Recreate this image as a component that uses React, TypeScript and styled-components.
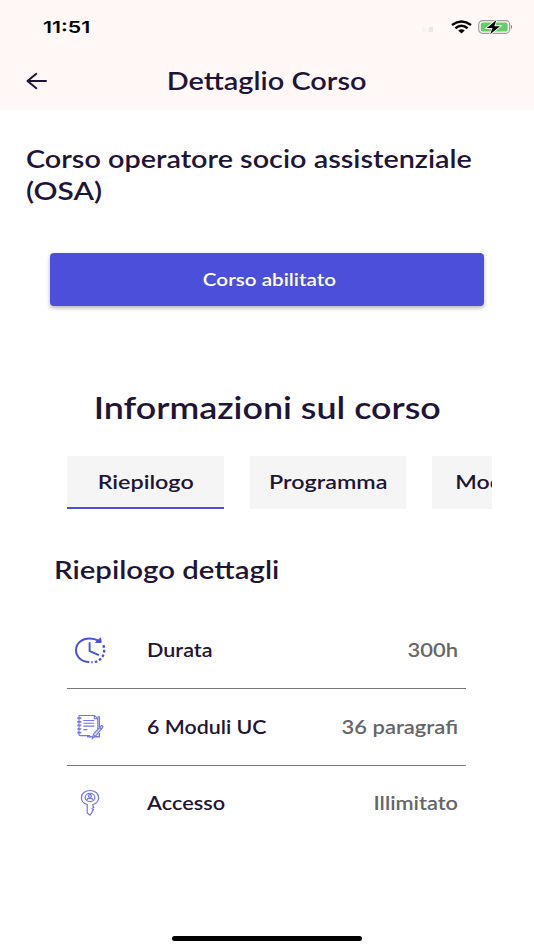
import React from 'react';
import styled, { createGlobalStyle } from 'styled-components';

const ink = '#1f1537';
const brand = '#4b4fd9';

const GlobalStyle = createGlobalStyle`
  * { box-sizing: border-box; }
  html, body { margin: 0; padding: 0; background: #fff; overflow: hidden; }
  body { font-family: Lato, 'Noto Sans', sans-serif; color: ${ink}; }
  h1, h2, h3 { margin: 0; font-weight: 600; }
`;

const Screen = styled.div`
  width: 534px;
  height: 950px;
  display: flex;
  flex-direction: column;
  background: #fff;
  overflow: hidden;
`;

/* Widened text; the origin keeps the aligned edge in place. */
const Wide = styled.span<{ $x: number; $from?: 'left' | 'center' | 'right' }>`
  display: inline-block;
  white-space: nowrap;
  transform: scaleX(${p => p.$x});
  transform-origin: ${p => p.$from ?? 'left'} center;
`;

const Top = styled.header`
  height: 110px;
  flex: none;
  background: #fff8f7;
`;

const StatusBar = styled.div`
  height: 53px;
  padding: 0 20px 0 43px;
  display: flex;
  align-items: center;
  justify-content: space-between;
`;

const Clock = styled.div`
  color: #000;
  font: 600 16.5px/20px Inter, sans-serif;
`;

const StatusIcons = styled.div`
  display: flex;
  align-items: center;
  svg { display: block; }
`;

const NavBar = styled.div`
  height: 57px;
  display: grid;
  grid-template-columns: 74px 1fr 74px;
  align-items: center;
  padding-bottom: 2px;
`;

const BackButton = styled.button`
  border: 0;
  padding: 1px 0 0 25px;
  background: none;
  svg { display: block; }
`;

const NavTitle = styled.h1`
  text-align: center;
  font-size: 24.5px;
  line-height: 32px;
`;

const CourseTitle = styled.h2`
  margin: 33px 26px 0;
  display: flex;
  flex-direction: column;
  align-items: flex-start;
  font-size: 24.3px;
  line-height: 31.5px;
`;

const EnrolButton = styled.button`
  flex: none;
  height: 52.5px;
  margin: 47px 50px 0;
  border: 0;
  padding: 1px 0 0 4px;
  border-radius: 4px;
  background: ${brand};
  box-shadow: 0 2px 4px rgba(0, 0, 0, 0.3);
  color: #fff;
  font: 600 17.5px/24px Lato, sans-serif;
`;

const InfoTitle = styled.h2`
  margin-top: 81px;
  text-align: center;
  font-size: 30px;
  line-height: 40px;
`;

const Tabs = styled.nav`
  flex: none;
  margin: 29.5px 42px 0 67.4px;
  display: flex;
  gap: 26px;
  overflow: hidden;
`;

const Tab = styled.button<{ $active?: boolean }>`
  flex: 0 0 156.3px;
  height: 52.5px;
  padding: 0 0 1px;
  border: 0;
  border-bottom: 2px solid ${p => (p.$active ? brand : '#f5f5f5')};
  background: #f5f5f5;
  color: ${ink};
  font: 600 19.8px/26px Lato, sans-serif;
`;

const SectionTitle = styled.h3`
  margin: 45px 0 0 54px;
  font-size: 24.4px;
  line-height: 32px;
`;

const Details = styled.div`
  margin: 26.6px 67.6px 0 67.4px;
`;

const Row = styled.div`
  height: 76.3px;
  display: grid;
  grid-template-columns: 79.6px 1fr auto;
  align-items: center;
  padding-right: 8px;
  font-size: 18.3px;
  line-height: 26px;
  font-weight: 600;
  & + & { border-top: 1px solid #77757a; }
  svg { display: block; margin-left: 4.4px; }
`;

const Value = styled.span`
  color: #666;
  text-align: right;
`;

const HomeIndicator = styled.div`
  width: 190px;
  height: 5px;
  margin: auto auto 9px;
  border-radius: 3px;
  background: #000;
`;

const Signal = () => (
  <svg width="30" height="10" viewBox="0 0 30 10">
    <rect x="1" y="5" width="4" height="5" fill="#f8f3f2" />
    <rect x="7.5" y="5" width="4.5" height="5" fill="#ebe7e5" />
  </svg>
);

const Wifi = () => (
  <svg width="27" height="14" viewBox="0 0 27 14" fill="none" stroke="#000" strokeWidth="2.4">
    <path d="M1 4.9 Q10.5 -1.8 20 4.9" />
    <path d="M4.4 8.3 Q10.5 3.4 16.6 8.3" />
    <path d="M7.2 10.5 Q10.5 8.1 13.8 10.5 L10.5 13.4Z" fill="#000" stroke="none" />
  </svg>
);

const Battery = () => (
  <svg width="36" height="16" viewBox="0 0 36 16">
    <rect x=".7" y="1.7" width="31" height="12.6" rx="3.8" fill="none" stroke="#a29e9e" strokeWidth="1.2" />
    <rect x="2.8" y="3.6" width="26.8" height="8.8" rx="2" fill="#62cf68" />
    <path d="M33 5.8q2 2.2 0 4.4z" fill="#777" />
    <path d="M18.4.9 8.8 9h5.7l-2.3 6.3 9.8-8.1h-5.7z" fill="#000" stroke="#fff8f7" strokeWidth="1.8" paintOrder="stroke" />
  </svg>
);

const BackArrow = () => (
  <svg width="24" height="18" viewBox="0 0 24 18" fill="none" stroke={ink} strokeWidth="2" strokeLinecap="round" strokeLinejoin="round">
    <path d="M21 9H2.5M11.3 1.8 2.5 9l8.8 7.2" />
  </svg>
);

const ClockIcon = () => (
  <svg width="36" height="28" viewBox="0 0 36 28" fill="none" stroke={brand} strokeWidth="2">
    <path d="M17.3 26C9.3 25.7 4 20.7 4 14 4 7.2 10 2.4 17.6 2.4q5.2 0 9.3 2.5" />
    <path d="M28.6 1.9l.6 4.5h-5.6z" fill={brand} stroke={brand} strokeWidth="1" />
    <path d="M31.4 9.2C34.4 18.5 28.7 26.6 19.4 26.2" strokeWidth="2.3" strokeDasharray="2.6 2.1" />
    <path d="M17.6 6.2v9l9.3 4" strokeWidth="1.9" />
  </svg>
);

const NotebookIcon = () => (
  <svg width="36" height="28" viewBox="0 0 36 28" fill="none" stroke="#7376e3" strokeWidth="1.1">
    <path d="M7 2.5h15.5l3.3 3V16M7 2.5V21.6q0 1 1.4 1h9.8M22.3 2.5v3.3H26" />
    <path d="M25.5 3.9h1.8v10M27.3 20v3.7H15" strokeWidth="1.4" />
    <path d="M11.3 7.5h11M11.3 10.3h11M11.3 13.1h11M11.3 16.6h4" />
    <path d="M5.3 5.2h4M5.3 8.8h4M5.3 12.4h4M5.3 16h4M5.3 19.6h4" strokeWidth="1.7" />
    <path d="m20.4 25.4 1-4.2 8-8.6q1.7-.2 1.6 1.5l-7.7 9.2z" fill="#d9daf8" />
    <path d="m21.5 21.8 1.9 1.6M27 14.5l2.4 1.7" />
  </svg>
);

const KeyIcon = () => (
  <svg width="36" height="28" viewBox="0 0 36 28" fill="none" stroke="#7376e3" strokeWidth="1.2">
    <path d="M15.2 15.5C11.3 14.5 9.4 12 9.4 8.8c0-4.2 3.7-7.3 8.6-7.3s8.6 3.1 8.6 7.3c0 3.2-2 5.7-5.7 6.7v1.6l1 1-1.8 1.4 1.5 1.2-1.5 1.3v1.4L18 26.1l-2.8-2.1z" />
    <ellipse cx="18" cy="8.5" rx="4.9" ry="4.1" />
    <ellipse cx="18" cy="7" rx="1.5" ry="1.4" />
    <path d="M14.7 11.4q.6-2 2.3-2h2q1.7 0 2.3 2" />
  </svg>
);

const tabs = [
  { label: 'Riepilogo', x: 1.18 },
  { label: 'Programma', x: 1.18 },
  { label: 'Moduli UC', x: 1.165 },
];

const details = [
  { icon: <ClockIcon />, label: 'Durata', lx: 1.18, value: '300h', vx: 1.2 },
  { icon: <NotebookIcon />, label: '6 Moduli UC', lx: 1.17, value: '36 paragrafi', vx: 1.2 },
  { icon: <KeyIcon />, label: 'Accesso', lx: 1.19, value: 'Illimitato', vx: 1.19 },
];

export default function App() {
  return (
    <Screen>
      <GlobalStyle />
      <Top>
        <StatusBar>
          <Clock><Wide $x={1.29}>11:51</Wide></Clock>
          <StatusIcons>
            <Signal />
            <Wifi />
            <Battery />
          </StatusIcons>
        </StatusBar>
        <NavBar>
          <BackButton aria-label="Indietro"><BackArrow /></BackButton>
          <NavTitle><Wide $x={1.18} $from="center">Dettaglio Corso</Wide></NavTitle>
        </NavBar>
      </Top>
      <CourseTitle>
        <Wide $x={1.185}>Corso operatore socio assistenziale</Wide>
        <Wide $x={1.23}>(OSA)</Wide>
      </CourseTitle>
      <EnrolButton><Wide $x={1.18} $from="center">Corso abilitato</Wide></EnrolButton>
      <InfoTitle><Wide $x={1.195} $from="center">Informazioni sul corso</Wide></InfoTitle>
      <Tabs>
        {tabs.map((t, i) => (
          <Tab key={t.label} $active={i === 0}>
            <Wide $x={t.x} $from="center">{t.label}</Wide>
          </Tab>
        ))}
      </Tabs>
      <SectionTitle><Wide $x={1.205}>Riepilogo dettagli</Wide></SectionTitle>
      <Details>
        {details.map(d => (
          <Row key={d.label}>
            {d.icon}
            <span><Wide $x={d.lx}>{d.label}</Wide></span>
            <Value><Wide $x={d.vx} $from="right">{d.value}</Wide></Value>
          </Row>
        ))}
      </Details>
      <HomeIndicator />
    </Screen>
  );
}
